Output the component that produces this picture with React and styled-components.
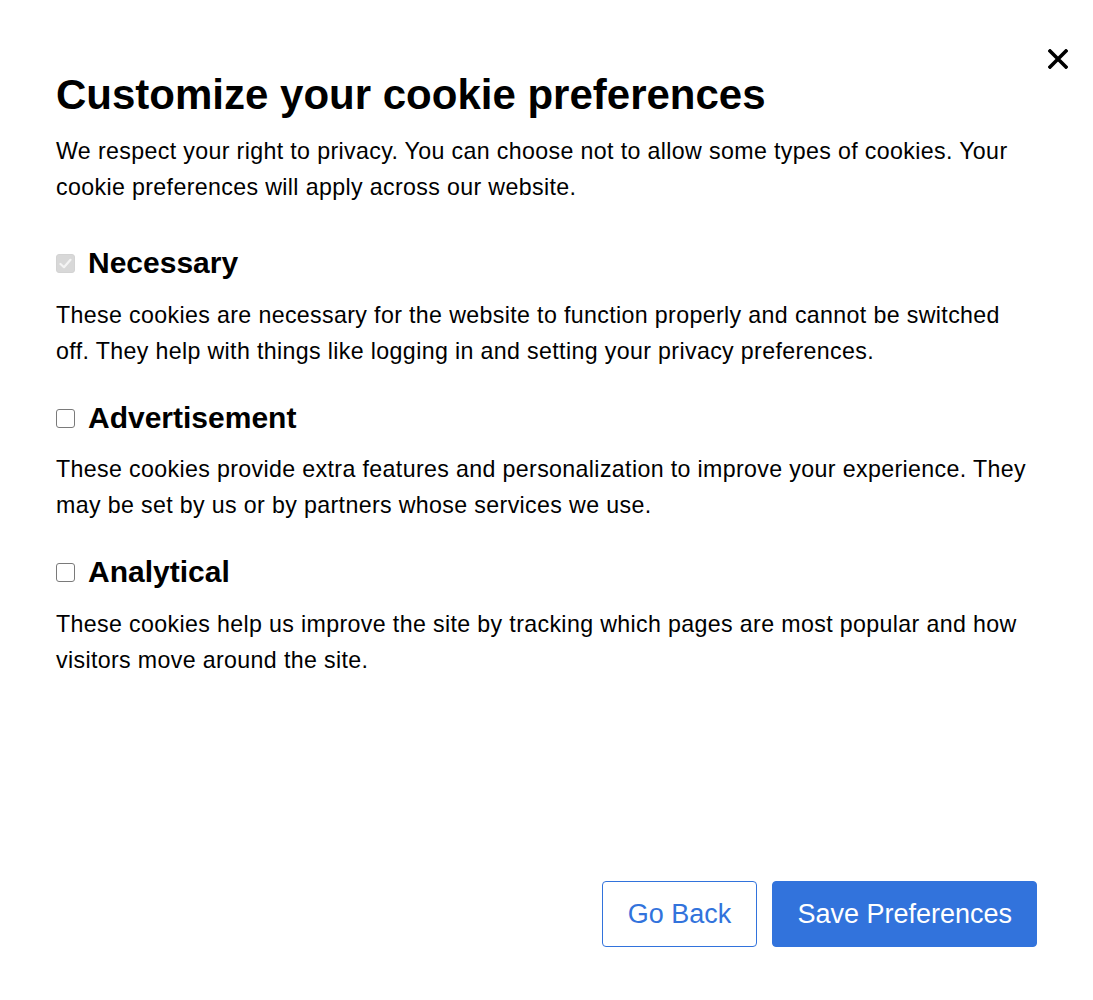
import React, { useState } from 'react'
import styled, { createGlobalStyle } from 'styled-components'

const GlobalStyle = createGlobalStyle`
  html, body {
    margin: 0;
    padding: 0;
    background: #fff;
  }
  body {
    font-family: "Liberation Sans", Arial, Helvetica, sans-serif;
    color: #000;
  }
`

const Modal = styled.div`
  position: relative;
  box-sizing: border-box;
  width: 1093px;
  height: 1000px;
  padding: 72px 56px 53px 56px;
  display: flex;
  flex-direction: column;
`

const CloseButton = styled.button`
  position: absolute;
  top: 47px;
  right: 23px;
  width: 24px;
  height: 24px;
  padding: 0;
  border: none;
  background: none;
  cursor: pointer;
  display: flex;
  align-items: center;
  justify-content: center;
`

const Title = styled.h1`
  margin: 0;
  font-size: 42px;
  line-height: 46px;
  font-weight: 700;
`

const Text = styled.p`
  margin: 0;
  font-size: 23.2px;
  letter-spacing: 0.36px;
  line-height: 36px;
  margin-top: ${props => props.top || 0}px;
`

const Section = styled.div`
  margin-top: ${props => props.top}px;
`

const SectionHeader = styled.label`
  display: flex;
  align-items: center;
  gap: 13px;
  font-size: 30px;
  line-height: 36px;
  font-weight: 700;
  cursor: ${props => props.disabled ? 'default' : 'pointer'};
`

const Box = styled.span`
  box-sizing: border-box;
  width: 19px;
  height: 19px;
  border-radius: 3px;
  border: 1px solid ${props => props.disabled ? '#d3d3d3' : '#7a7a7a'};
  background: ${props => props.disabled ? '#d8d8d8' : '#fff'};
  display: flex;
  align-items: center;
  justify-content: center;
  flex-shrink: 0;
`

const Footer = styled.div`
  margin-top: auto;
  display: flex;
  justify-content: flex-end;
  gap: 15px;
`

const Button = styled.button`
  box-sizing: border-box;
  height: 66px;
  padding: 0 ${props => props.primary ? 24 : 25}px;
  border-radius: 4px;
  font-family: "Liberation Sans", Arial, Helvetica, sans-serif;
  font-size: 27px;
  cursor: pointer;
  border: 1px solid #3273dc;
  color: ${props => props.primary ? '#fff' : '#3273dc'};
  background: ${props => props.primary ? '#3273dc' : '#fff'};
`

const Check = ({ checked, disabled, onChange }) => (
  <Box disabled={disabled} onClick={() => !disabled && onChange(!checked)}>
    {checked && (
      <svg width="13" height="11" viewBox="0 0 13 11">
        <path d="M1.5 6 L5 9.2 L11.5 1.8" fill="none"
          stroke={disabled ? '#f4f4f4' : '#333'} strokeWidth="2.2"
          strokeLinecap="round" strokeLinejoin="round" />
      </svg>
    )}
  </Box>
)

const App = () => {
  const [ads, setAds] = useState(false)
  const [analytics, setAnalytics] = useState(false)

  return (
    <>
      <GlobalStyle />
      <Modal>
        <CloseButton aria-label="Close">
          <svg width="20" height="20" viewBox="0 0 20 20">
            <path d="M2 2 L18 18 M18 2 L2 18" stroke="#000" strokeWidth="3.6" strokeLinecap="square" />
          </svg>
        </CloseButton>

        <Title>Customize your cookie preferences</Title>
        <Text top={15}>
          We respect your right to privacy. You can choose not to allow some types of cookies. Your
          cookie preferences will apply across our website.
        </Text>

        <Section top={40}>
          <SectionHeader disabled>
            <Check checked disabled />
            Necessary
          </SectionHeader>
          <Text top={16}>
            These cookies are necessary for the website to function properly and cannot be switched
            off. They help with things like logging in and setting your privacy preferences.
          </Text>
        </Section>

        <Section top={31}>
          <SectionHeader>
            <Check checked={ads} onChange={setAds} />
            Advertisement
          </SectionHeader>
          <Text top={15}>
            These cookies provide extra features and personalization to improve your experience. They
            may be set by us or by partners whose services we use.
          </Text>
        </Section>

        <Section top={31}>
          <SectionHeader>
            <Check checked={analytics} onChange={setAnalytics} />
            Analytical
          </SectionHeader>
          <Text top={16}>
            These cookies help us improve the site by tracking which pages are most popular and how
            visitors move around the site.
          </Text>
        </Section>

        <Footer>
          <Button>Go Back</Button>
          <Button primary>Save Preferences</Button>
        </Footer>
      </Modal>
    </>
  )
}

export default App
